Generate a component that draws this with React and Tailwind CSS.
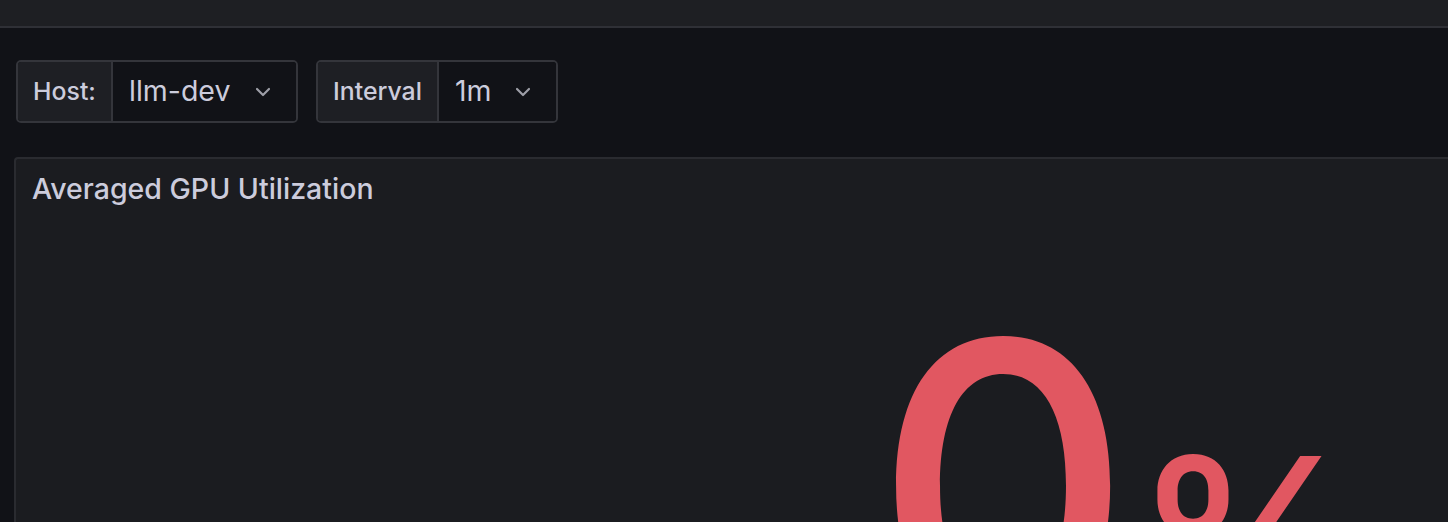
import React from "react";

function Chevron() {
  return (
    <svg width="16" height="10" viewBox="0 0 16 10" fill="none">
      <path d="M2 2 L8 8 L14 2" stroke="#9d9ea7" strokeWidth="2.2" strokeLinecap="round" strokeLinejoin="round" />
    </svg>
  );
}

function VarPicker({ label, value, labelW, valueW }) {
  return (
    <div className="flex h-[63px] rounded-[5px] border-2 border-[#34353b] overflow-hidden">
      <div
        className="flex items-center justify-center bg-[#1e1f24] border-r-2 border-[#34353b] text-[24.8px] font-medium text-[#ccccdc]"
        style={{ width: labelW }}
      >
        {label}
      </div>
      <div className="flex items-center justify-between bg-[#111217] pl-[16px] pr-[25px] text-[28.5px] text-[#ccccdc]" style={{ width: valueW }}>
        <span>{value}</span>
        <Chevron />
      </div>
    </div>
  );
}

export default function App() {
  return (
    <div className="w-full h-[522px] bg-[#111217] overflow-hidden" style={{ fontFamily: "Inter, 'Noto Sans', sans-serif" }}>
      <div className="h-[28px] bg-[#1e1f23] border-b-2 border-[#2f3036]" />
      <div className="flex gap-[18px] pl-[16px] pt-[32px]">
        <VarPicker label="Host:" value="llm-dev" labelW={95} valueW={183} />
        <VarPicker label="Interval" value="1m" labelW={121} valueW={117} />
      </div>
      <div className="ml-[14px] mt-[34px] h-[400px] bg-[#1b1c20] border-2 border-r-0 border-[#2a2b30] rounded-tl-[4px]">
        <div className="pl-[16px] pt-[9px] text-[28.5px] leading-[42px] font-medium text-[#ccccdc]">
          Averaged GPU Utilization
        </div>
        <div className="flex items-baseline pl-[858px] pt-[75px] text-[#e15761] font-medium leading-none">
          <span className="text-[400px]">0</span>
          <span className="text-[240px]">%</span>
        </div>
      </div>
    </div>
  );
}
